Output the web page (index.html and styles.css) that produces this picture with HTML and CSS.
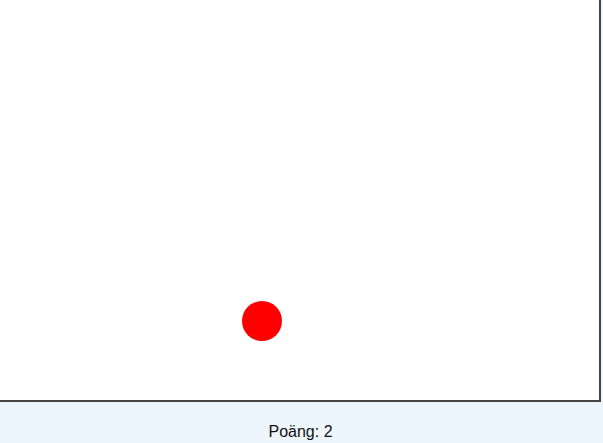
FILE: index.html
```
<!DOCTYPE html>
<html lang="sv">
<head>
<meta charset="utf-8">
<title>Spel</title>
<link rel="stylesheet" href="styles.css">
</head>
<body>
<div class="game">
  <div class="board">
    <div class="ball"></div>
  </div>
  <div class="score">Poäng: 2</div>
</div>
</body>
</html>
```
FILE: styles.css
```
html, body {
  margin: 0;
  padding: 0;
  background: #eef6fd;
  font-family: "Liberation Sans", Arial, sans-serif;
}
.game {
  width: 601px;
}
.board {
  position: relative;
  width: 599px;
  height: 400px;
  background: #ffffff;
  border-right: 2px solid #444444;
  border-bottom: 2px solid #444444;
}
.ball {
  position: absolute;
  left: 242px;
  top: 301px;
  width: 40px;
  height: 40px;
  border-radius: 50%;
  background: #ff0000;
}
.score {
  padding-top: 21px;
  font-size: 16px;
  line-height: 18px;
  color: #111111;
  text-align: center;
}
```
